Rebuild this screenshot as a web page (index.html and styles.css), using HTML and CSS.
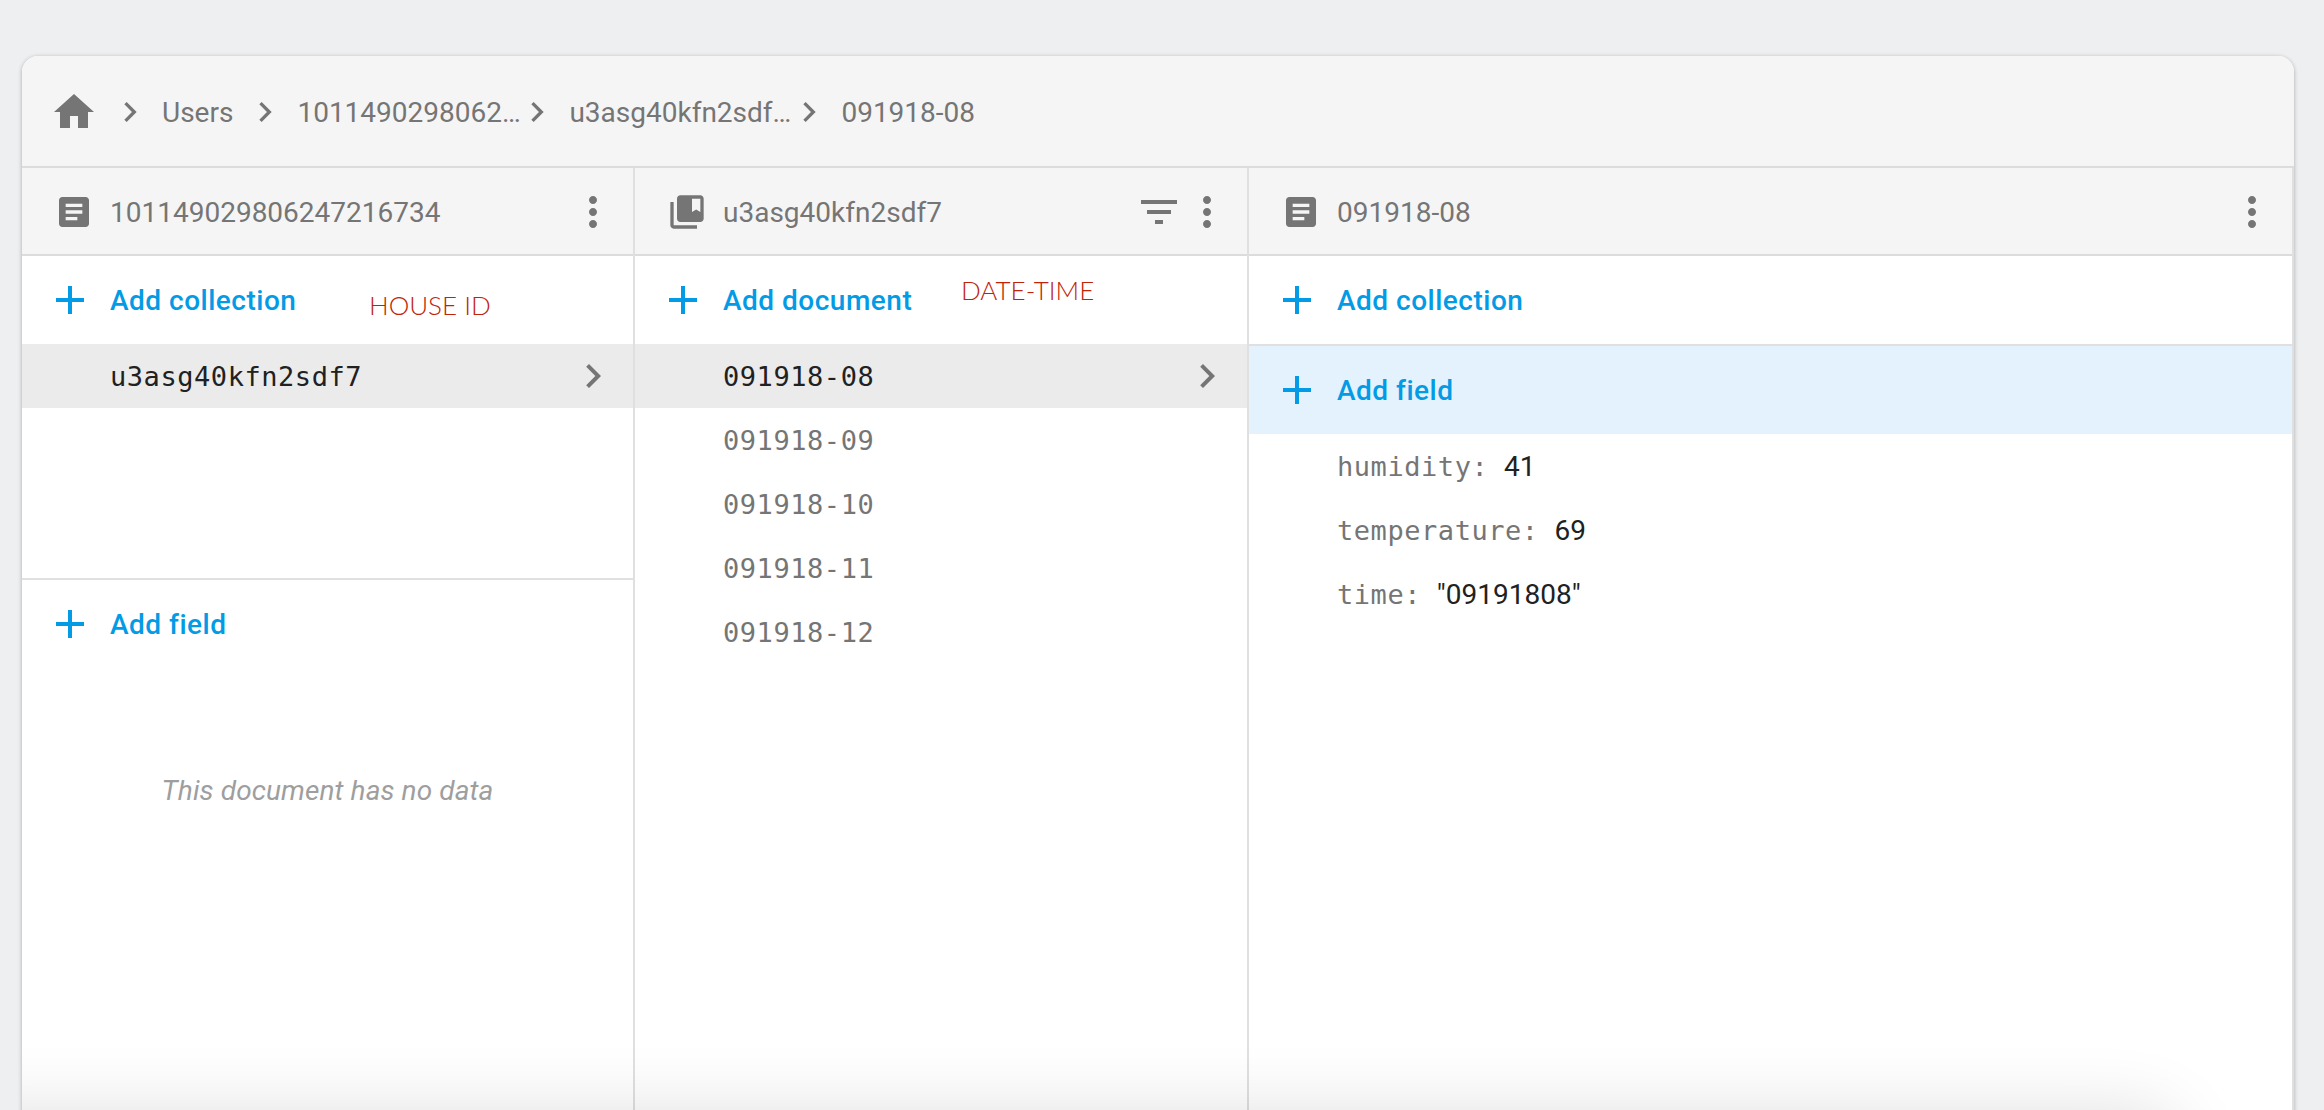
FILE: index.html
```html
<!DOCTYPE html>
<html lang="en">
<head>
    <meta charset="UTF-8">
    <meta name="viewport" content="width=device-width, initial-scale=1.0">
    <title>Cloud Firestore data</title>
    <link rel="stylesheet" href="styles.css">
</head>
<body>

    <svg class="sprites" xmlns="http://www.w3.org/2000/svg">
        <symbol id="i-home" viewBox="0 0 24 24"><path d="M10 20v-6h4v6h5v-8h3L12 3 2 12h3v8z"/></symbol>
        <symbol id="i-chevron" viewBox="0 0 24 24"><path d="M10 6L8.59 7.41 13.17 12l-4.58 4.59L10 18l6-6z"/></symbol>
        <symbol id="i-doc" viewBox="0 0 24 24"><path d="M19 3H5c-1.1 0-2 .9-2 2v14c0 1.1.9 2 2 2h14c1.1 0 2-.9 2-2V5c0-1.1-.9-2-2-2zm-5 14H7v-2h7v2zm3-4H7v-2h10v2zm0-4H7V7h10v2z"/></symbol>
        <symbol id="i-collection" viewBox="0 0 24 24"><path d="M4 6H2v14c0 1.1.9 2 2 2h14v-2H4V6zm16-4H8c-1.1 0-2 .9-2 2v12c0 1.1.9 2 2 2h12c1.1 0 2-.9 2-2V4c0-1.1-.9-2-2-2zm0 10l-2.5-1.5L15 12V4h5v8z"/></symbol>
        <symbol id="i-more" viewBox="0 0 24 24"><path d="M12 8c1.1 0 2-.9 2-2s-.9-2-2-2-2 .9-2 2 .9 2 2 2zm0 2c-1.1 0-2 .9-2 2s.9 2 2 2 2-.9 2-2-.9-2-2-2zm0 6c-1.1 0-2 .9-2 2s.9 2 2 2 2-.9 2-2-.9-2-2-2z"/></symbol>
        <symbol id="i-filter" viewBox="0 0 24 24"><path d="M10 18h4v-2h-4v2zM3 6v2h18V6H3zm3 7h12v-2H6v2z"/></symbol>
        <symbol id="i-plus" viewBox="0 0 24 24"><path d="M19 13h-6v6h-2v-6H5v-2h6V5h2v6h6v2z"/></symbol>
    </svg>

    <div class="card">
        <div class="crumbs">
            <svg class="icon"><use href="#i-home"/></svg>
            <svg class="icon-small"><use href="#i-chevron"/></svg>
            <span class="crumb">Users</span>
            <svg class="icon-small"><use href="#i-chevron"/></svg>
            <span class="crumb crumb-cut">1011490298062…</span>
            <svg class="icon-small"><use href="#i-chevron"/></svg>
            <span class="crumb crumb-cut">u3asg40kfn2sdf…</span>
            <svg class="icon-small"><use href="#i-chevron"/></svg>
            <span class="crumb">091918-08</span>
        </div>

        <div class="columns">
            <div class="column">
                <div class="column-head">
                    <svg class="icon-head"><use href="#i-doc"/></svg>
                    <span class="head-title">101149029806247216734</span>
                    <svg class="icon"><use href="#i-more"/></svg>
                </div>
                <div class="list-part">
                    <div class="add-row"><svg class="icon"><use href="#i-plus"/></svg>Add collection</div>
                    <div class="item item-selected"><span class="item-name">u3asg40kfn2sdf7</span><svg class="icon"><use href="#i-chevron"/></svg></div>
                </div>
                <div class="add-row"><svg class="icon"><use href="#i-plus"/></svg>Add field</div>
                <p class="empty">This document has no data</p>
            </div>

            <div class="column">
                <div class="column-head">
                    <svg class="icon-head"><use href="#i-collection"/></svg>
                    <span class="head-title">u3asg40kfn2sdf7</span>
                    <svg class="icon"><use href="#i-filter"/></svg>
                    <svg class="icon"><use href="#i-more"/></svg>
                </div>
                <div class="add-row"><svg class="icon"><use href="#i-plus"/></svg>Add document</div>
                <div class="item item-selected"><span class="item-name">091918-08</span><svg class="icon"><use href="#i-chevron"/></svg></div>
                <div class="item"><span class="item-name">091918-09</span></div>
                <div class="item"><span class="item-name">091918-10</span></div>
                <div class="item"><span class="item-name">091918-11</span></div>
                <div class="item"><span class="item-name">091918-12</span></div>
            </div>

            <div class="column">
                <div class="column-head">
                    <svg class="icon-head"><use href="#i-doc"/></svg>
                    <span class="head-title">091918-08</span>
                    <svg class="icon"><use href="#i-more"/></svg>
                </div>
                <div class="add-row add-row-line"><svg class="icon"><use href="#i-plus"/></svg>Add collection</div>
                <div class="add-row add-row-blue"><svg class="icon"><use href="#i-plus"/></svg>Add field</div>
                <div class="field"><span class="field-key">humidity: </span>41</div>
                <div class="field"><span class="field-key">temperature: </span>69</div>
                <div class="field"><span class="field-key">time: </span>"09191808"</div>
            </div>
        </div>

        <span class="note note-house">HOUSE ID</span>
        <span class="note note-date">DATE-TIME</span>
        <div class="bottom-fade"></div>
    </div>

</body>
</html>
```

FILE: styles.css
```css
html, body {
    height: 100%;
    margin: 0;
    overflow: hidden;
}

body {
    font-family: Roboto, "Liberation Sans", sans-serif;
    font-size: 28px;
    background-color: #eeeff1;
    color: #757575;
    padding: 56px 30px 0 22px;
    box-sizing: border-box;
}

.sprites {
    display: none;
}

svg {
    fill: #757575;
    flex: none;
}

.icon {
    width: 48px;
    height: 48px;
}

.icon-small {
    width: 40px;
    height: 40px;
    margin: 0 -2px;
}

.icon-head {
    width: 40px;
    height: 40px;
    margin: 0 16px 0 32px;
}

.card {
    position: relative;
    height: 1100px;
    background-color: #fff;
    border-radius: 16px 16px 0 0;
    box-shadow: 0 1px 4px rgba(0, 0, 0, 0.3);
    overflow: hidden;
}

.crumbs {
    display: flex;
    align-items: center;
    height: 108px;
    padding: 2px 0 0 28px;
    background-color: #f5f5f5;
    border-bottom: 2px solid #dcdcdc;
}

.crumbs .icon {
    margin-right: 14px;
}

.crumb {
    margin: 0 14px;
    white-space: nowrap;
}

.crumb-cut {
    margin-right: 0;
    width: 222px;
}

.columns {
    display: grid;
    grid-template-columns: 613px 614px 1fr;
    height: 990px;
}

.column {
    border-right: 2px solid #e0e0e0;
}

.column-head {
    display: flex;
    align-items: center;
    height: 84px;
    padding: 2px 16px 0 0;
    background-color: #f5f5f5;
    border-bottom: 2px solid #dcdcdc;
}

.head-title {
    flex: 1;
    white-space: nowrap;
}

.add-row {
    display: flex;
    align-items: center;
    gap: 16px;
    height: 88px;
    padding-left: 24px;
    font-weight: 500;
    letter-spacing: 0.5px;
    color: #039be5;
}

.add-row svg {
    fill: #039be5;
}

.add-row-line {
    border-bottom: 2px solid #e0e0e0;
}

.add-row-blue {
    background-color: #e3f2fd;
}

.list-part {
    height: 322px;
    border-bottom: 2px solid #e0e0e0;
}

.item {
    display: flex;
    align-items: center;
    height: 64px;
    padding: 0 16px 0 88px;
    font-family: "DejaVu Sans Mono", "Liberation Mono", monospace;
    font-size: 27px;
    letter-spacing: 0.55px;
}

.item-name {
    flex: 1;
}

.item-selected {
    background-color: #ebebeb;
    color: #212121;
}

.field {
    display: flex;
    align-items: center;
    height: 64px;
    padding-left: 88px;
    color: #212121;
    white-space: pre;
}

.field-key {
    font-family: "DejaVu Sans Mono", "Liberation Mono", monospace;
    font-size: 27px;
    letter-spacing: 0.55px;
    margin-right: -1px;
    color: #757575;
}

.empty {
    margin: 106px 0 0;
    text-align: center;
    font-style: italic;
    letter-spacing: 0.1px;
    color: #9e9e9e;
}

/* red labels drawn on top of the screenshot */
.note {
    position: absolute;
    font-family: Lato, "Open Sans", sans-serif;
    font-size: 26px;
    font-weight: 300;
    color: #bf2408;
    white-space: nowrap;
}

.note-house {
    left: 347px;
    top: 233px;
}

.note-date {
    left: 939px;
    top: 218px;
}

/* soft shadow coming up from below the fold */
.bottom-fade {
    position: absolute;
    left: -100px;
    top: 1054px;
    width: 2258px;
    height: 100px;
    border-radius: 40px;
    box-shadow: 0 0 70px rgba(0, 0, 0, 0.12);
}
```
